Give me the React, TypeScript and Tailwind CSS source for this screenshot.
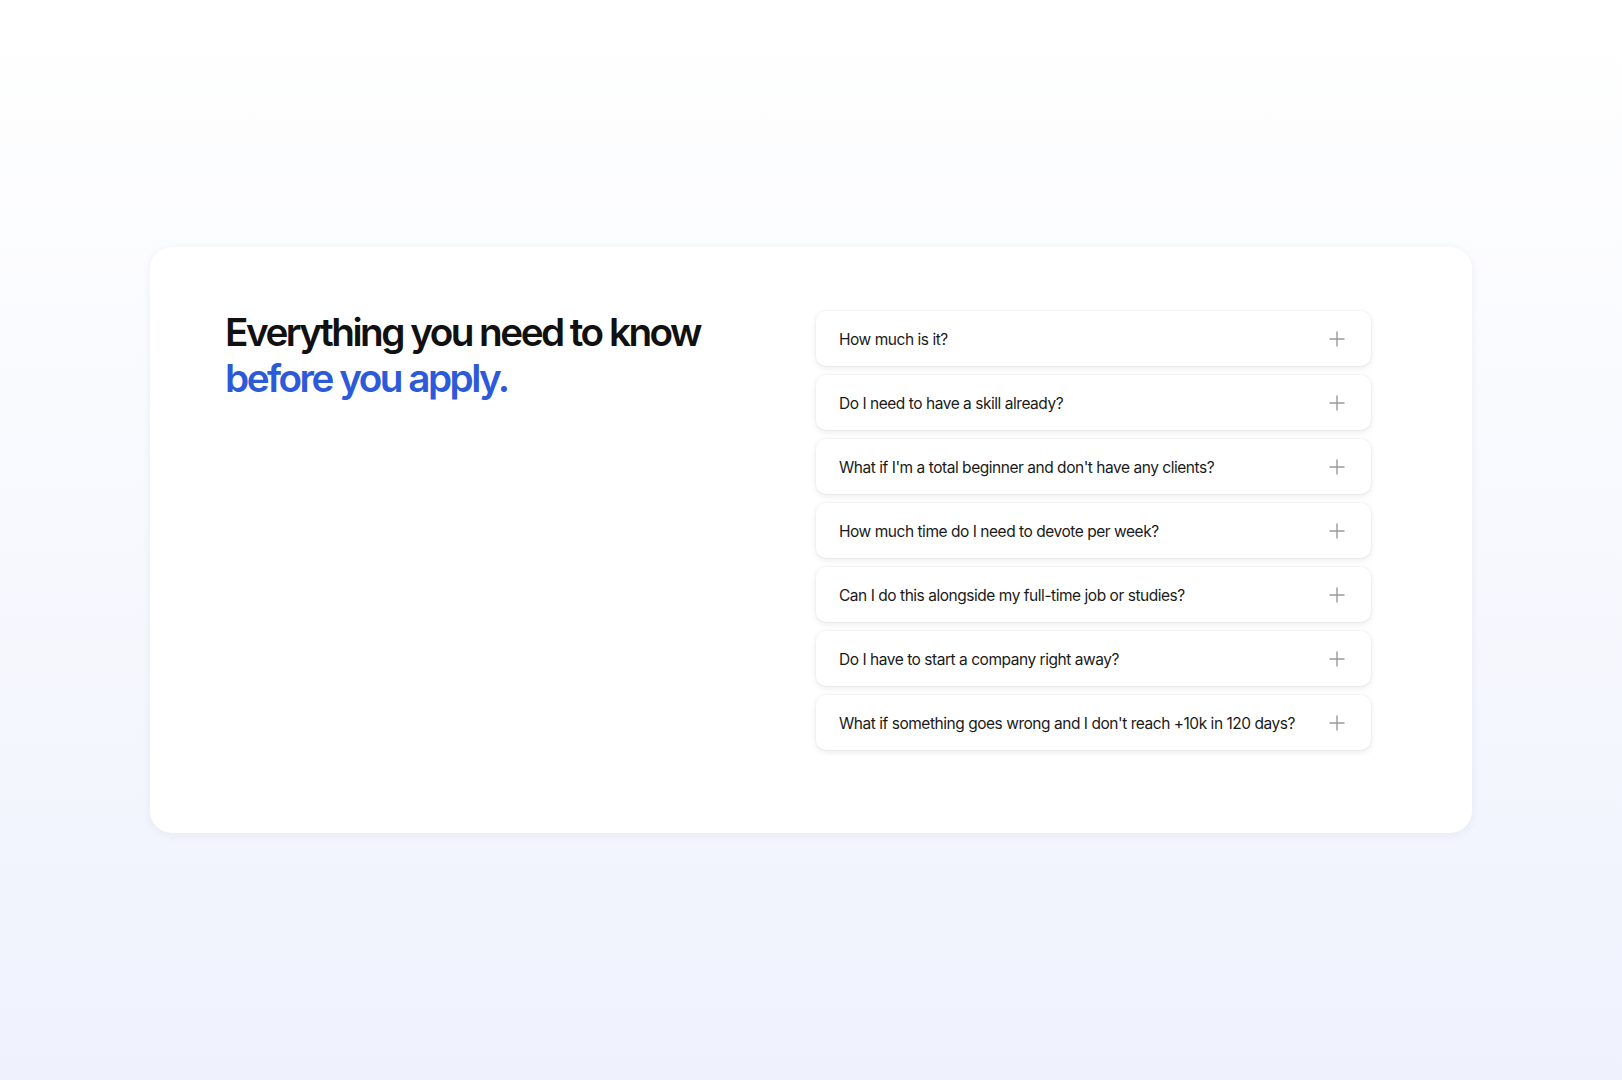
import React from "react";

const questions = [
  "How much is it?",
  "Do I need to have a skill already?",
  "What if I'm a total beginner and don't have any clients?",
  "How much time do I need to devote per week?",
  "Can I do this alongside my full-time job or studies?",
  "Do I have to start a company right away?",
  "What if something goes wrong and I don't reach +10k in 120 days?",
];

function Plus() {
  return (
    <svg width="16" height="16" viewBox="0 0 16 16" fill="none" className="shrink-0">
      <path d="M8 1v14M1 8h14" stroke="#9a9a9a" strokeWidth="1.4" strokeLinecap="round" />
    </svg>
  );
}

export default function App() {
  return (
    <div
      className="min-h-[1080px] w-full flex items-center justify-center bg-gradient-to-b from-[#ffffff] to-[#eff2fd]"
      style={{ fontFamily: "Inter, 'Noto Sans', sans-serif" }}
    >
      <div className="w-[1322px] h-[586px] bg-white rounded-[22px] shadow-[0_2px_10px_rgba(30,40,90,0.06)] flex pl-[75px] pr-[101px] pt-[64px] pb-[82px]">
        <div className="flex-1">
          <h2 className="text-[38.7px] leading-[46px] font-semibold tracking-[-0.065em] text-[#111111] -mt-[2px]">
            Everything you need to know
            <br />
            <span className="text-[#2d5ad9]">before you apply.</span>
          </h2>
        </div>
        <div className="w-[555px] flex flex-col gap-[9px]">
          {questions.map((q) => (
            <div
              key={q}
              className="h-[55px] bg-white rounded-[10px] shadow-[0_2px_6px_rgba(0,0,0,0.09),0_0_0_1px_rgba(0,0,0,0.025)] flex items-center justify-between pl-[23px] pr-[26px]"
            >
              <span className="text-[15.5px] tracking-[-0.03em] text-[#1a1a1a] pt-[3px]">{q}</span>
              <Plus />
            </div>
          ))}
        </div>
      </div>
    </div>
  );
}
